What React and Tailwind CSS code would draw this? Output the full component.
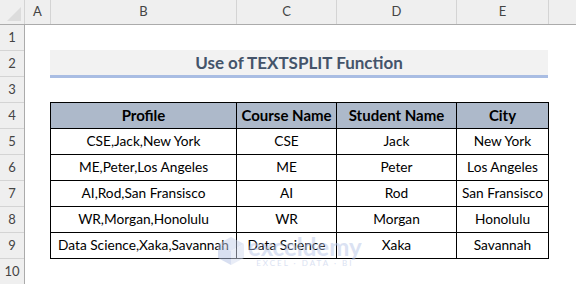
import React from "react";

const rows = [
  ["CSE,Jack,New York", "CSE", "Jack", "New York"],
  ["ME,Peter,Los Angeles", "ME", "Peter", "Los Angeles"],
  ["AI,Rod,San Fransisco", "AI", "Rod", "San Fransisco"],
  ["WR,Morgan,Honolulu", "WR", "Morgan", "Honolulu"],
  ["Data Science,Xaka,Savannah", "Data Science", "Xaka", "Savannah"],
];

const font = { fontFamily: "Lato, 'Liberation Sans', sans-serif" };

export default function App() {
  const letters = [
    ["A", "w-[26px]"],
    ["B", "w-[186px]"],
    ["C", "w-[100px]"],
    ["D", "w-[120px]"],
    ["E", "w-[92px]"],
  ];
  return (
    <div className="relative w-[576px] h-[284px] overflow-hidden bg-white" style={font}>
      {/* column header */}
      <div className="flex h-[25px] bg-[#efefef] border-b border-[#ababab]">
        <div className="w-[25px] shrink-0 border-r border-[#d4d4d4] relative">
          <svg className="absolute right-[3px] bottom-[3px]" width="14" height="14" viewBox="0 0 14 14">
            <polygon points="14,0 14,14 0,14" fill="#dcdcdc" />
          </svg>
        </div>
        {letters.map(([l, w]) => (
          <div
            key={l}
            className={`${w} shrink-0 flex items-center justify-center border-r border-[#d4d4d4] text-[13px] text-[#444]`}
          >
            {l}
          </div>
        ))}
        <div className="flex-1" />
      </div>

      <div className="flex">
        {/* row headers */}
        <div className="w-[25px] shrink-0 flex flex-col bg-[#efefef] border-r border-[#ababab]">
          {[1, 2, 3, 4, 5, 6, 7, 8, 9, 10].map((n) => (
            <div
              key={n}
              className="h-[26px] shrink-0 flex items-center justify-center border-b border-[#d4d4d4] text-[13px] text-[#444]"
            >
              {n}
            </div>
          ))}
        </div>

        {/* sheet */}
        <div className="flex flex-col pl-[25px]">
          <div className="h-[25px]" />
          <div className="w-[498px] h-[28px] bg-[#f2f2f2] border-b-[3px] border-[#a9bde3] flex items-center justify-center text-[17px] font-bold text-[#44546a]">
            Use of TEXTSPLIT Function
          </div>
          <div className="h-[24px]" />
          <div className="w-[499px] grid grid-cols-[186px_100px_120px_92px] border-t border-l border-black text-[13.7px] text-black">
            {["Profile", "Course Name", "Student Name", "City"].map((h) => (
              <div
                key={h}
                className="h-[26px] flex items-center justify-center bg-[#adb9ca] border-r border-b border-black font-bold text-[15px] whitespace-nowrap"
              >
                {h}
              </div>
            ))}
            {rows.map((r, i) =>
              r.map((c, j) => (
                <div
                  key={i + "-" + j}
                  className="h-[26px] flex items-center justify-center border-r border-b border-black whitespace-nowrap"
                >
                  {c}
                </div>
              ))
            )}
          </div>
        </div>
      </div>

      {/* watermark */}
      <div className="absolute left-[217px] top-[236px] flex items-start gap-[3px] opacity-50 pointer-events-none">
        <svg width="28" height="30" viewBox="0 0 28 30">
          <polygon points="14,1 27,8 14,15 1,8" fill="#c5d0ea" />
          <polygon points="1,8 14,15 14,29 1,22" fill="#b3c1e4" />
          <polygon points="27,8 14,15 14,29 27,22" fill="#d4dcf0" />
        </svg>
        <div className="flex flex-col items-center">
          <div className="text-[24px] leading-[22px] font-bold text-[#b8c6e8]">exceldemy</div>
          <div className="text-[8px] leading-[10px] tracking-[2px] text-[#b8c6e8]">EXCEL · DATA · BI</div>
        </div>
      </div>
    </div>
  );
}
